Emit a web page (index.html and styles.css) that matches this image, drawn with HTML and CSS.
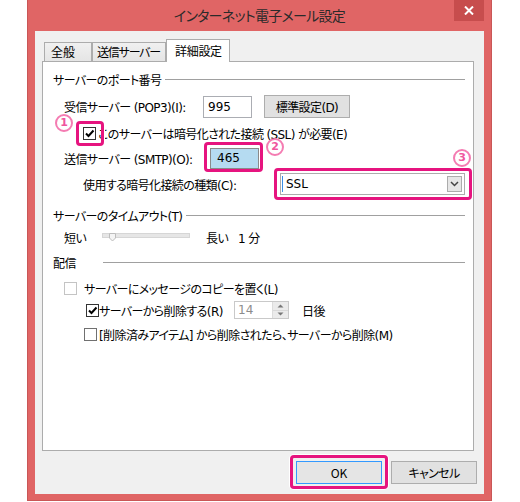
FILE: index.html
```html
<!DOCTYPE html>
<html lang="ja">
<head>
<meta charset="utf-8">
<title>インターネット電子メール設定</title>
<link rel="stylesheet" href="styles.css">
</head>
<body>
<div class="window">
  <div class="titlebar">
    <div></div>
    <div class="title">インターネット電子メール設定</div>
    <div class="close"><svg width="10" height="9" viewBox="0 0 10 9"><path d="M1 0.5 L9 8.5 M9 0.5 L1 8.5" stroke="#fff" stroke-width="2" fill="none"/></svg></div>
  </div>
  <div class="client">
    <div class="tabs">
      <div class="tab t-general">全般</div>
      <div class="tab t-send">送信サーバー</div>
      <div class="tab active">詳細設定</div>
    </div>
    <div class="panel">
      <div class="row hdr r-a"><span class="hdr-text">サーバーのポート番号</span><span class="hdr-line"></span></div>
      <div class="row r-b">
        <span class="lbl w-pop">受信サーバー (POP3)(I):</span>
        <span class="input in-995">995</span>
        <span class="btn btn-std">標準設定(D)</span>
      </div>
      <div class="row r-c">
        <span class="cb cb-ssl"><svg width="11" height="11" viewBox="0 0 11 11"><path d="M2 5.5 L4.5 8 L9.5 2.5" stroke="#000" stroke-width="2" fill="none"/></svg></span>
        <span class="cb-text">このサーバーは暗号化された接続 (SSL) が必要(E)</span>
      </div>
      <div class="row r-d">
        <span class="lbl w-smtp">送信サーバー (SMTP)(O):</span>
        <span class="input in-465">465</span>
      </div>
      <div class="row r-e">
        <span class="lbl w-enc">使用する暗号化接続の種類(C):</span>
        <span class="select">
          <span class="caret"></span>
          <span class="sel-text">SSL</span>
          <span class="sel-arrow"><svg width="9" height="6" viewBox="0 0 9 6"><path d="M1 1 L4.5 4.5 L8 1" stroke="#444" stroke-width="1.5" fill="none"/></svg></span>
        </span>
      </div>
      <div class="row hdr r-f"><span class="hdr-text">サーバーのタイムアウト(T)</span><span class="hdr-line"></span></div>
      <div class="row r-g">
        <span class="lbl w-short">短い</span>
        <span class="track"><svg class="thumb" width="8" height="9" viewBox="0 0 8 9"><path d="M0.5 0.5 H6.5 V5 L3.5 8 L0.5 5 Z" fill="#f4f4f4" stroke="#bdbdbd"/></svg></span>
        <span class="lbl w-long">長い</span>
        <span class="lbl">1 分</span>
      </div>
      <div class="row hdr r-h"><span class="hdr-text w-deliv">配信</span><span class="hdr-line flush"></span></div>
      <div class="row r-i">
        <span class="cb cb-faded"></span>
        <span class="cb-text gap7">サーバーにメッセージのコピーを置く(L)</span>
      </div>
      <div class="row r-j">
        <span class="cb cb-del"><svg width="11" height="11" viewBox="0 0 11 11"><path d="M2 5.5 L4.5 8 L9.5 2.5" stroke="#000" stroke-width="2" fill="none"/></svg></span>
        <span class="cb-text w-delete">サーバーから削除する(R)</span>
        <span class="spin">
          <span class="spin-text">14</span>
          <span class="spin-btns">
            <span class="spin-b"><svg width="7" height="4" viewBox="0 0 7 4"><path d="M0.5 3.5 L3.5 0.5 L6.5 3.5 Z" fill="#777"/></svg></span>
            <span class="spin-b"><svg width="7" height="4" viewBox="0 0 7 4"><path d="M0.5 0.5 L3.5 3.5 L6.5 0.5 Z" fill="#777"/></svg></span>
          </span>
        </span>
        <span class="lbl days">日後</span>
      </div>
      <div class="row r-k">
        <span class="cb cb-items"></span>
        <span class="cb-text">[削除済みアイテム] から削除されたら、サーバーから削除(M)</span>
      </div>

      <div class="mark box1"></div>
      <div class="mark box2"></div>
      <div class="mark box3"></div>
      <div class="num n1">1</div>
      <div class="num n2">2</div>
      <div class="num n3">3</div>
    </div>
    <div class="buttons">
      <div class="ok-mark"><span class="btn btn-ok">OK</span></div>
      <span class="btn btn-cancel">キャンセル</span>
    </div>
  </div>
</div>
</body>
</html>
```

FILE: styles.css
```css
* { box-sizing: border-box; }
html, body { margin: 0; padding: 0; background: #fff; }
body {
  font-family: "DejaVu Sans", "Noto Sans CJK JP", sans-serif;
  font-size: 12px;
  color: #000;
  font-feature-settings: "palt";
  letter-spacing: -0.6px;
}

.window {
  margin-left: 27px;
  width: 465px;
  height: 501px;
  background: #e06565;
  border: 1px solid #c95656;
  border-top: none;
  padding: 0 7px 6px 7px;
  display: flex;
  flex-direction: column;
}

.titlebar {
  height: 31px;
  display: grid;
  grid-template-columns: 1fr auto 1fr;
}
.title {
  align-self: center;
  font-family: "Noto Sans CJK JP", sans-serif;
  font-size: 14px;
  letter-spacing: -0.7px;
  color: #2a2a2a;
  line-height: 20px;
  margin-top: -1px;
}
.close {
  justify-self: end;
  align-self: start;
  width: 30px;
  height: 21px;
  background: #c74d4d;
  display: flex;
  align-items: center;
  justify-content: center;
}

.client {
  flex: 1;
  background: #f0f0f0;
  padding: 8px 10px 0 7px;
  display: flex;
  flex-direction: column;
}

.tabs {
  height: 23px;
  margin-bottom: -1px;
  padding-left: 2px;
  display: flex;
  align-items: flex-end;
  position: relative;
  z-index: 1;
}
.tab {
  height: 19px;
  margin-bottom: 1px;
  border: 1px solid #acacac;
  border-bottom: none;
  background: linear-gradient(#f0f0f0, #e5e5e5);
  padding-left: 5px;
  line-height: 17px;
  font-family: "Noto Sans CJK JP", sans-serif;
  white-space: nowrap;
}
.t-general { width: 48px; padding-left: 6px; letter-spacing: 0; }
.t-send { width: 74px; padding-left: 4px; letter-spacing: -1.2px; }
.tab.active {
  height: 23px;
  margin-bottom: 0;
  width: 64px;
  background: #fff;
  padding-left: 8px;
  line-height: 21px;
  letter-spacing: -0.3px;
}

.panel {
  position: relative;
  height: 390px;
  background: #fff;
  border: 1px solid #acacac;
  padding: 8px 8px 0 10px;
}

.row { display: flex; align-items: center; white-space: nowrap; }
.hdr { height: 18px; }
.hdr-line { flex: 1; height: 1px; background: #a0a0a0; margin-left: 4px; }
.hdr-line.flush { margin-left: 0; }
.w-deliv { width: 50px; }

.r-b { height: 23px; margin-top: 7px; }
.r-c { height: 22px; margin-top: 4px; }
.r-d { height: 22px; margin-top: 3px; }
.r-e { height: 22px; margin-top: 4px; }
.r-f { margin-top: 11px; }
.r-g { height: 18px; margin-top: 4px; }
.r-h { margin-top: 7px; }
.r-i { height: 18px; margin-top: 8px; }
.r-j { height: 18px; margin-top: 4px; }
.r-k { height: 18px; margin-top: 6px; }

.lbl { display: inline-block; }
.w-pop { margin-left: 11px; width: 139px; }
.w-smtp { margin-left: 11px; width: 146px; }
.w-enc { margin-left: 30px; width: 197px; }

.input {
  height: 22px;
  width: 49px;
  border: 1px solid #abadb3;
  background: #fff;
  line-height: 20px;
  letter-spacing: 0;
}
.in-995 { padding-left: 4px; }
.in-465 {
  height: 21px;
  line-height: 19px;
  padding-left: 6px;
  background: #b5dbf1;
  border-color: #8a8a8a;
}

.btn {
  display: flex;
  align-items: center;
  justify-content: center;
  width: 86px;
  height: 23px;
  background: #e1e1e1;
  border: 1px solid #adadad;
}
.btn-std { margin-left: 12px; }

.cb {
  width: 13px;
  height: 13px;
  border: 1px solid #333;
  background: #fff;
  display: flex;
  align-items: center;
  justify-content: center;
  flex: none;
}
.cb-ssl { margin-left: 30px; }
.cb-text { margin-left: 2px; }
.gap7 { margin-left: 7px; }
.cb-faded { margin-left: 11px; border-color: #c4c4c4; }
.cb-del { margin-left: 33px; }
.w-delete { margin-left: 0; width: 135px; }
.cb-items { margin-left: 31px; border-color: #707070; }

.select {
  width: 185px;
  height: 22px;
  border: 1px solid #acacac;
  background: #fff;
  display: flex;
  align-items: center;
  padding-left: 1px;
  letter-spacing: 0;
}
.caret { width: 1px; height: 16px; background: #3a8ee6; }
.sel-text { margin-left: 3px; flex: 1; }
.sel-arrow {
  width: 15px;
  height: 16px;
  margin-right: 2px;
  background: #e6e6e6;
  border: 1px solid #acacac;
  display: flex;
  align-items: center;
  justify-content: center;
}

.w-short { margin-left: 11px; width: 38px; }
.track {
  position: relative;
  width: 88px;
  height: 5px;
  background: #e6e6e6;
  border: 1px solid #d6d6d6;
  margin-top: -3px;
}
.thumb { position: absolute; left: 6px; top: -1px; }
.w-long { margin-left: 16px; width: 32px; }

.spin {
  width: 55px;
  height: 18px;
  border: 1px solid #c9c9c9;
  background: #fff;
  display: flex;
  letter-spacing: 0;
}
.spin-text { flex: 1; padding-left: 3px; color: #8c8c8c; line-height: 16px; }
.spin-btns {
  width: 16px;
  display: flex;
  flex-direction: column;
  background: #ebebeb;
  border-left: 1px solid #dcdcdc;
}
.spin-b { flex: 1; display: flex; align-items: center; justify-content: center; }
.spin-b + .spin-b { border-top: 1px solid #d8d8d8; }
.days { margin-left: 13px; }

.mark {
  position: absolute;
  border: 3px solid #e6147f;
  border-radius: 4px;
  box-shadow: 0 0 0 1px #fff;
}
.box1 { left: 33px; top: 59px; width: 28px; height: 25px; }
.box2 { left: 161px; top: 80px; width: 59px; height: 30px; }
.box3 { left: 231px; top: 106px; width: 198px; height: 32px; }

.num {
  position: absolute;
  width: 18px;
  height: 18px;
  border: 2px solid #f47cb2;
  border-radius: 50%;
  background: #fff;
  color: #f0559e;
  font-weight: bold;
  font-size: 11px;
  letter-spacing: 0;
  line-height: 14px;
  text-align: center;
}
.n1 { left: 12px; top: 52px; }
.n2 { left: 223px; top: 76px; }
.n3 { left: 410px; top: 87px; }

.buttons {
  margin-top: 10px;
  margin-right: -3px;
  display: flex;
  justify-content: flex-end;
  align-items: flex-start;
}
.ok-mark {
  margin: -6px 3px -5px -6px;
  padding: 3px 3px 2px 3px;
  border: 3px solid #e6147f;
  border-radius: 4px;
  box-shadow: 0 0 0 1px #fff;
}
.btn-ok { background: #e5e5e5; border-color: #3399ff; font-family: "Noto Sans CJK JP", sans-serif; letter-spacing: 0; }
.btn-cancel { font-family: "Noto Sans CJK JP", sans-serif; }
```
